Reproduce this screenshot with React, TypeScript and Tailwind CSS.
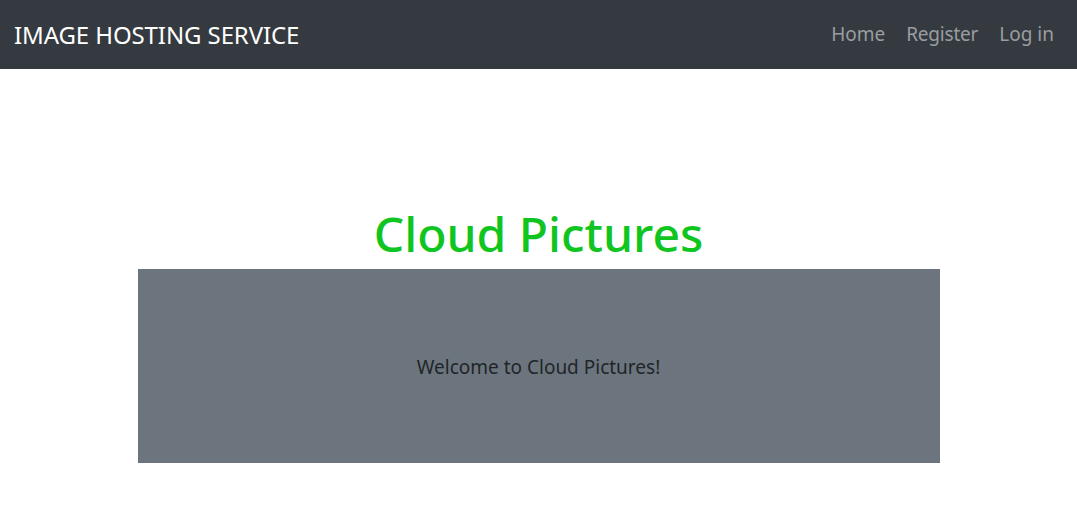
const App = () => {
  return (
    <div className="min-h-[523px] bg-white" style={{ fontFamily: '"Noto Sans", "Open Sans", sans-serif' }}>
      <header className="h-[69px] bg-[#343a40] flex items-center justify-between pl-[14px] pr-[23px]">
        <a href="#" className="text-white text-[24px] leading-none tracking-[-0.1px]">
          IMAGE HOSTING SERVICE
        </a>
        <nav className="flex items-center gap-[21px] text-[19px] text-[#9a9da0]">
          <a href="#">Home</a>
          <a href="#" className="tracking-[-0.2px]">Register</a>
          <a href="#">Log in</a>
        </nav>
      </header>

      <main className="pt-[129px] flex flex-col items-center">
        <h1 className="text-[#10c51f] text-[48px] font-medium leading-[71px]">Cloud Pictures</h1>
        <div className="w-[802px] h-[194px] bg-[#6c757d] flex items-center justify-center">
          <p className="text-[#212529] text-[19px] translate-y-[1px]">Welcome to Cloud Pictures!</p>
        </div>
      </main>
    </div>
  );
};

export default App;
